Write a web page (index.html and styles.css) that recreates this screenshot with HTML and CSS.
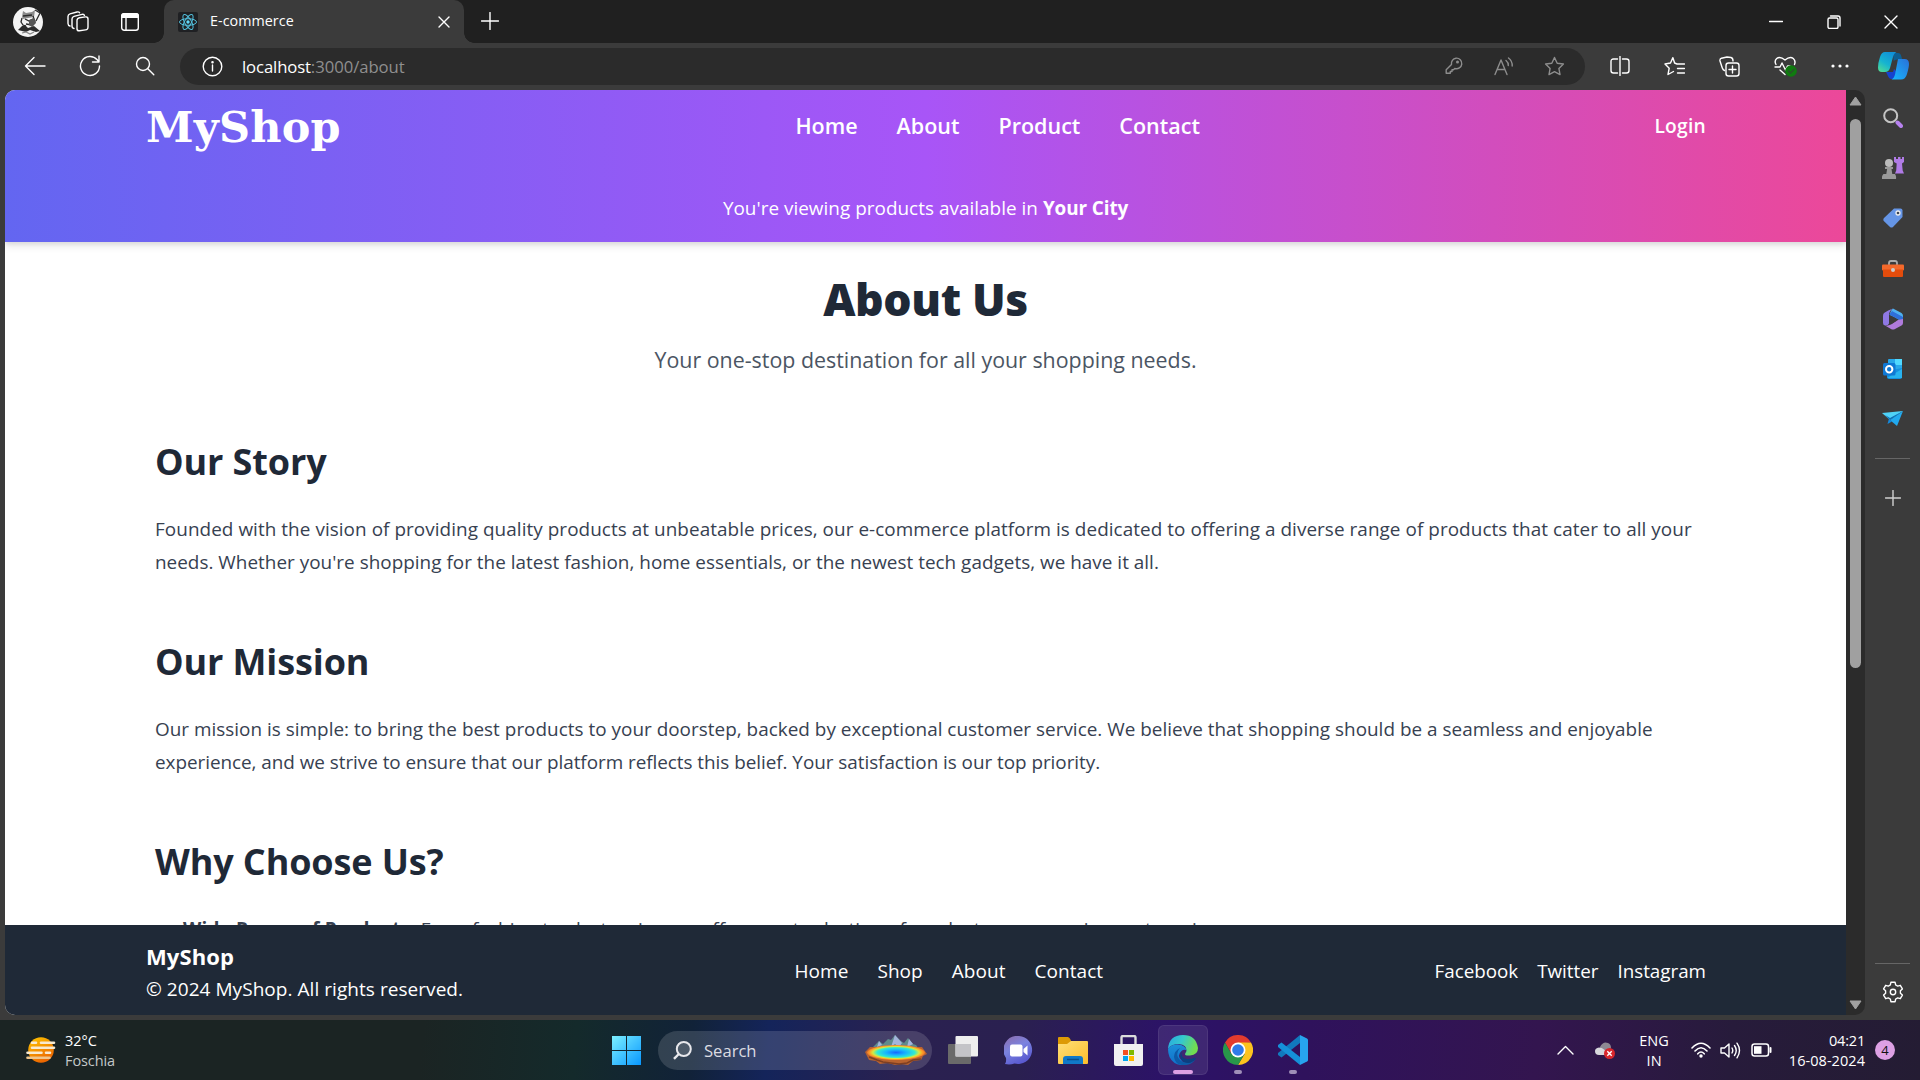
FILE: index.html
```html
<!DOCTYPE html>
<html lang="en">
<head>
<meta charset="utf-8">
<title>E-commerce</title>
<link rel="stylesheet" href="styles.css">
</head>
<body>
<div class="titlebar">
  <div class="slot avatar-slot">
    <svg width="30" height="30" viewBox="0 0 30 30"><circle cx="15" cy="15" r="15" fill="#f4f4f4"/><path d="M9 10l1-6 3 2 6-1 3-2-1 7-6 1-5 1z" fill="#8a8a8a"/><path d="M22 3l5 3-4 8M10 9l9-1M9 11l-1 4 2 3 3 1M12 12l4 2 4-2M13 17l6 1M20 9l2 6-3 4" stroke="#2a2a2a" stroke-width="1.300" fill="none"/><path d="M16 13l5-2 2 5-4 4-3-2z" fill="#555"/><path d="M5 23l4-4 3-1 3 3 6-2 6 5-4 1-6-2-4 2-4-1z" fill="#2c2c2c"/><path d="M9 26l4-1 4 2 4-2" stroke="#888" stroke-width="1.200" fill="none"/></svg>
  </div>
  <div class="slot space-slot">
    <svg class="line" width="22" height="22" viewBox="0 0 22 22"><rect x="10" y="6.500" width="11" height="13" rx="2.500" transform="skewY(-8) translate(0 2)"/><path d="M7 17.500q-2-.3-2-2.500V8q0-2 2-2.600l8-2q2-.4 2.500 1"/><path d="M3 15q-2-.6-2-2.500V5.500q0-2 2-2.600l7-1.900q2-.4 2.600.8"/></svg>
  </div>
  <div class="slot space-slot">
    <svg class="line" width="20" height="20" viewBox="0 0 20 20"><rect x="1.700" y="1.700" width="16.600" height="16.600" rx="2.500"/><path d="M1 6V4q0-3 3-3h12q3 0 3 3v2z" fill="#fff" stroke="none"/><path d="M6 6v12"/></svg>
  </div>
  <div class="tab">
    <svg class="favicon" width="20" height="20" viewBox="0 0 20 20"><rect width="20" height="20" rx="2" fill="#1f2023"/><g fill="none" stroke="#53c1de" stroke-width="1"><ellipse cx="10" cy="10" rx="8.500" ry="3.300"/><ellipse cx="10" cy="10" rx="8.500" ry="3.300" transform="rotate(60 10 10)"/><ellipse cx="10" cy="10" rx="8.500" ry="3.300" transform="rotate(120 10 10)"/></g><circle cx="10" cy="10" r="1.700" fill="#61dafb"/></svg>
    <span class="tab-title">E-commerce</span>
    <svg class="line tab-close" width="12" height="12" viewBox="0 0 12 12"><path d="M1 1l10 10M11 1L1 11"/></svg>
  </div>
  <svg class="line new-tab" width="18" height="18" viewBox="0 0 18 18"><path d="M9 .500v17M.500 9h17"/></svg>
  <div class="window-controls">
    <div class="control"><svg class="line" width="14" height="14" viewBox="0 0 14 14"><path d="M.500 6.500h13"/></svg></div>
    <div class="control"><svg class="line" width="14" height="14" viewBox="0 0 14 14"><rect x="1" y="3" width="10" height="10.500" rx="1.500"/><path d="M3.500 1H11q2 0 2 2v8"/></svg></div>
    <div class="control"><svg class="line" width="14" height="14" viewBox="0 0 14 14"><path d="M1 1l12 12M13 1L1 13"/></svg></div>
  </div>
</div>

<div class="toolbar">
  <div class="tool nav-tool"><svg class="line" width="22" height="20" viewBox="0 0 22 20"><path d="M21 10H1.500M10 1.500L1.500 10l8.500 8.500"/></svg></div>
  <div class="tool nav-tool"><svg class="line" width="22" height="22" viewBox="0 0 22 22"><path d="M20.500 11a9.500 9.500 0 1 1-2.300-6.200L20 7M20 1v6h-6.500"/></svg></div>
  <div class="tool nav-tool"><svg class="line" width="20" height="20" viewBox="0 0 20 20"><circle cx="8" cy="8" r="6.500"/><path d="M12.800 12.800l6 6"/></svg></div>
  <div class="address">
    <svg class="line" width="21" height="21" viewBox="0 0 21 21"><circle cx="10.500" cy="10.500" r="9.300"/><path d="M10.500 9v6"/><circle cx="10.500" cy="6.300" r=".600" fill="#fff"/></svg>
    <div class="url"><span class="host">localhost</span><span class="path">:3000/about</span></div>
    <div class="address-tools">
      <div class="address-tool"><svg class="line dim" width="18" height="18" viewBox="0 0 18 18"><path d="M11 1.200a5.300 5.300 0 1 1-1.200 10.300L8.500 12.800H7v1.700H5.300v1.700H1.200v-3.400l5.300-5.300A5.300 5.300 0 0 1 11 1.200z" /><circle cx="12.500" cy="5" r=".8"/></svg></div>
      <div class="address-tool"><svg class="line dim" width="20" height="19" viewBox="0 0 20 19"><path d="M1 17.500L7 3l6 14.500M3 12.500h8M12 3.500q2.500 2 2.300 5M14.500 1q4 3.200 3.700 8"/></svg></div>
      <div class="address-tool"><svg class="line dim" width="21" height="21" viewBox="0 0 21 21"><path d="M10.500 1.500l2.700 5.700 6.200.8-4.500 4.400 1.100 6.200-5.500-3-5.500 3 1.100-6.200L1.600 8l6.200-.8z"/></svg></div>
    </div>
  </div>
  <div class="browser-tools">
    <div class="browser-tool"><svg class="line" width="20" height="20" viewBox="0 0 20 20"><path d="M7.500 3H3.500Q1 3 1 5.500v9Q1 17 3.500 17h4M12.500 3h4Q19 3 19 5.500v9q0 2.500-2.500 2.500h-4M10 .500v19"/></svg></div>
    <div class="browser-tool"><svg class="line" width="21" height="21" viewBox="0 0 21 21"><path d="M13 8h7.500M13.500 12.500h7M13.500 17h7M13 8L10.600 7 8.900 1.600 6.500 7 1 8l4.200 4.200L4 18.500l5.500-3"/></svg></div>
    <div class="browser-tool"><svg class="line" width="21" height="21" viewBox="0 0 21 21"><rect x="7" y="7" width="13" height="13" rx="2.500"/><path d="M13.500 10v7M10 13.500h7M5.500 14.500Q4 14 3.300 12L1 5q-.4-2 1.500-2.800L8 1l4 .500Q14 2 14 5"/></svg></div>
    <div class="browser-tool"><svg class="line" width="23" height="21" viewBox="0 0 23 21"><path d="M2 8.500Q0 5 2.700 2.500 6-.200 11 4q5-4.200 8.300-1.500Q22 5 20.500 8.500M1 11h5l2-4 3.500 7 2-4H16M6 14l5 4.500"/><circle cx="17" cy="15" r="5.800" fill="#0f7b0f" stroke="none"/><path d="M14.500 15l2 2 3.500-3.500" stroke="#2d4d2d"/></svg></div>
    <div class="browser-tool"><svg width="18" height="4" viewBox="0 0 18 4" fill="#fff"><circle cx="2" cy="2" r="1.600"/><circle cx="9" cy="2" r="1.600"/><circle cx="16" cy="2" r="1.600"/></svg></div>
  </div>
  <div class="copilot"><svg width="31" height="28" viewBox="0 0 31 28"><defs><linearGradient id="cpa" x1="0" y1="1" x2=".6" y2="0"><stop offset="0" stop-color="#57e08e"/><stop offset=".5" stop-color="#16b4d0"/><stop offset="1" stop-color="#1192d8"/></linearGradient><linearGradient id="cpb" x1="0" y1="1" x2="1" y2="0"><stop offset="0" stop-color="#16b8ff"/><stop offset="1" stop-color="#2a70d8"/></linearGradient></defs><path d="M15 1h5q2.500 0 3.200 3l1 3.500h-5q-3 0-3.500 2z" fill="#0d5e92"/><path d="M8 20h7l1-3 3 3-2.500 7h-3Q11 27 10 24z" fill="#1543cf"/><path d="M7 0h11.500Q16 1 15 5l-3 11q-1.200 4-5 4H4q-4 0-4-4.500Q0 11 2 5 3.500 0 7 0z" fill="url(#cpa)"/><path d="M20 7h6.500Q31 7 31 12q0 3-2 10-1.500 5.500-6 5.500h-9.500q2.500-1 3.500-5z" fill="url(#cpb)"/></svg></div>
</div>

<div class="workspace">
  <div class="viewport">
    <header class="site-header">
      <div class="header-row">
        <div class="logo">MyShop</div>
        <nav class="site-nav"><a>Home</a><a>About</a><a>Product</a><a>Contact</a></nav>
        <a class="login">Login</a>
      </div>
      <p class="location">You're viewing products available in <b>Your City</b></p>
    </header>
    <main class="about">
      <div class="hero">
        <h1>About Us</h1>
        <p>Your one-stop destination for all your shopping needs.</p>
      </div>
      <section>
        <h2>Our Story</h2>
        <p>Founded with the vision of providing quality products at unbeatable prices, our e-commerce platform is dedicated to offering a diverse range of products that cater to all your<br><span class="snug">needs. Whether you're shopping for the latest fashion, home essentials, or the newest tech gadgets, we have it all.</span></p>
      </section>
      <section>
        <h2>Our Mission</h2>
        <p><span class="snug">Our mission is simple: to bring the best products to your doorstep, backed by exceptional customer service. We believe that shopping should be a seamless and enjoyable</span><br><span class="tight">experience, and we strive to ensure that our platform reflects this belief. Your satisfaction is our top priority.</span></p>
      </section>
      <section>
        <h2>Why Choose Us?</h2>
        <ul><li><b>Wide Range of Products:</b> <span class="snug">From fashion to electronics, we offer a vast selection of products across various categories.</span></li></ul>
      </section>
    </main>
    <footer class="site-footer">
      <div class="brand"><strong>MyShop</strong><span>© 2024 MyShop. All rights reserved.</span></div>
      <nav class="footer-nav"><a>Home</a><a>Shop</a><a>About</a><a>Contact</a></nav>
      <nav class="social"><a>Facebook</a><a>Twitter</a><a>Instagram</a></nav>
    </footer>
  </div>
  <div class="scrollbar">
    <svg width="13" height="10" viewBox="0 0 13 10"><path d="M6.500 1L12 9H1z" fill="#a0a0a0" stroke="#a0a0a0" stroke-linejoin="round"/></svg>
    <div class="thumb"></div>
    <svg class="arrow-down" width="13" height="10" viewBox="0 0 13 10"><path d="M6.500 9L1 1h11z" fill="#a0a0a0" stroke="#a0a0a0" stroke-linejoin="round"/></svg>
  </div>
  <aside class="sidebar">
    <div class="side-item"><svg width="20" height="20" viewBox="0 0 20 20"><circle cx="7.700" cy="7.700" r="6.500" fill="none" stroke="#c4c4c4" stroke-width="2"/><path d="M14.500 14.500l3.500 3.500" stroke="#b782ef" stroke-width="4" stroke-linecap="round"/></svg></div>
    <div class="side-item"><svg width="22" height="22" viewBox="0 0 22 22"><path d="M12 0h2v2h2V0h2.500v2h1.500V0h2v5l-2 1.500.7 7 1.300 3h-9l1.200-3 .5-7L12 5z" fill="#b07be6"/><circle cx="7" cy="6" r="4" fill="#bbb"/><path d="M3 10h8v2H9.500l.8 5H13q1.500 2 1 5H0q-.500-3 1.500-5h2.800l.8-5H3z" fill="#999"/></svg></div>
    <div class="side-item"><svg width="20" height="20" viewBox="0 0 20 20"><path d="M11 .500h6.500q2 0 2 2V9L10 19q-1.500 1-3 0L.8 13Q-.200 11.500 1 10z" fill="#6595e6"/><circle cx="15" cy="5" r="2" fill="#3b4454" stroke="#eee" stroke-width="1.300"/></svg></div>
    <div class="side-item"><svg width="22" height="18" viewBox="0 0 22 18"><path d="M7 5V3q0-2 2-2h4q2 0 2 2v2" stroke="#aaa" stroke-width="1.800" fill="none"/><rect y="4.500" width="22" height="6" rx="1" fill="#f4692b"/><path d="M1 9.500h20V16q0 1-1 1H2q-1 0-1-1z" fill="#e34c0c"/><circle cx="11" cy="10" r="2" fill="#ccc"/></svg></div>
    <div class="side-item"><svg width="20" height="22" viewBox="0 0 20 22"><path d="M10 .500Q5 2 1 5 0 6 0 8v7q0 2 2 2.500 3 .500 4-2V7q0-4 4-6.500z" fill="#8f78e4"/><path d="M10 .500l8.500 4.500Q20 6 20 8v6l-7-4-6-3q0-4 3-6.500z" fill="#4eb0f0"/><path d="M6 11V6.500L13 10l7 4V9L9 3 6 7z" fill="#2f6fd8"/><path d="M20 12v3q0 1.500-1.500 2.500L12 21q-2 1-4 0l-6-3.500q3 .5 6-1l7-4.500 5-1z" fill="#b07bdc"/><path d="M8 8l5 2.500v2.500L8.500 16 6.500 15V8z" fill="#3b3b3b"/></svg></div>
    <div class="side-item"><svg width="20" height="20" viewBox="0 0 20 20"><rect x="5" width="14" height="15" rx="1" fill="#28a8ea"/><rect x="12" width="7" height="6" fill="#50d9ff"/><path d="M4 12l15-3v9q0 2-2 2H6q-2 0-2-2z" fill="#1490df"/><path d="M4 19l15-9v9z" fill="#28b3f0"/><rect y="4" width="12.500" height="12.500" rx="1.500" fill="#0f78d4"/><circle cx="6.200" cy="10.200" r="3.200" fill="none" stroke="#fff" stroke-width="2"/></svg></div>
    <div class="side-item"><svg width="22" height="16" viewBox="0 0 22 16"><path d="M0 2l21-2-13 9z" fill="#4fd2f7"/><path d="M21 0l-6 15-7-6z" fill="#22a9ee"/><path d="M3 4l5 5 13-9L8 7z" fill="#0c6db5"/><path d="M7 7.500L5.500 13 10 10.500z" fill="#1589dc"/></svg></div>
    <div class="divider"></div>
    <svg class="line side-add" width="16" height="16" viewBox="0 0 16 16"><path d="M8 .500v15M.500 8h15"/></svg>
    <div class="divider bottom"></div>
    <svg class="line gear" width="22" height="22" viewBox="0 0 22 22"><path d="M8.900 1.300h4.200l.6 2.700 2 1.100 2.600-.8 2.100 3.600-2 1.900v2.400l2 1.900-2.100 3.600-2.600-.8-2 1.100-.6 2.700H8.900L8.300 18l-2-1.100-2.600.8-2.100-3.600 2-1.900V9.800l-2-1.900 2.100-3.600 2.600.8 2-1.100z"/><circle cx="11" cy="11" r="2.700"/></svg>
  </aside>
</div>

<div class="taskbar">
  <div class="weather">
    <svg width="30" height="26" viewBox="0 0 30 26"><defs><linearGradient id="sun" x1="0" y1="0" x2=".5" y2="1"><stop offset="0" stop-color="#ffc800"/><stop offset="1" stop-color="#ec6600"/></linearGradient></defs><circle cx="15" cy="13" r="12.800" fill="url(#sun)"/><g stroke="#f8ead0" stroke-width="2.600" stroke-linecap="round"><path d="M6 5.800h4M15 5.800h13M6 10.800h22M1.500 15.800h14M20 15.800h4"/><path d="M1.500 20.800h22" stroke="#f0c58b"/></g></svg>
    <div class="weather-text"><span>32°C</span><span class="condition">Foschia</span></div>
  </div>
  <div class="start"><svg width="29" height="29" viewBox="0 0 29 29"><defs><linearGradient id="win" x1="0" y1="0" x2="1" y2="1"><stop offset="0" stop-color="#7cf0ff"/><stop offset="1" stop-color="#0897ff"/></linearGradient></defs><path d="M0 0h14v14H0zM15 0h14v14H15zM0 15h14v14H0zM15 15h14v14H15z" fill="url(#win)"/></svg></div>
  <div class="search">
    <svg width="19" height="19" viewBox="0 0 19 19" fill="none" stroke="#e8e8ec" stroke-width="2"><circle cx="10.800" cy="8" r="7" fill="#ffffff22"/><path d="M5.800 13L1 17.800" stroke-width="2.400"/></svg>
    <span>Search</span>
    <svg class="spring" width="62" height="31" viewBox="0 0 62 31"><defs><radialGradient id="pool"><stop offset="0" stop-color="#1668ff"/><stop offset=".35" stop-color="#18b6ff"/><stop offset=".65" stop-color="#31ead0"/><stop offset=".8" stop-color="#d8e83e"/><stop offset=".92" stop-color="#ff9a24"/><stop offset="1" stop-color="#e87830"/></radialGradient></defs><path d="M8 12l6-6 4 3 5-5 3 1 4-5 6 6 3 2 4-5 5 6 3 1 3 4z" fill="#5f8a8c"/><path d="M30 0l-4 12 4-3 4 3 3-4zM44 4l-2 8 6-3zM14 6l-2 6 5-2z" fill="#a3b5dc"/><path d="M0 17l5-5h52l5 7-4 2-2 4-8 1-5 4-7-1-6 1-7-2-8 1-4-3-7-1z" fill="#b8622f"/><path d="M4 22l8 3 6 2 8 1 8 1 8-1 6-3 8-1" stroke="#7d3f22" stroke-width="1.500" fill="none"/><ellipse cx="31" cy="17.500" rx="29" ry="7.500" fill="url(#pool)"/></svg>
  </div>
  <div class="apps">
    <div class="app"><svg width="30" height="28" viewBox="0 0 30 28"><rect y="8" width="23" height="20" rx="1" fill="#6a6a6a"/><rect x="7.500" width="22.500" height="20.500" rx="1" fill="#eee"/><rect x="7.500" y="8" width="15.500" height="12.500" fill="#c4c4c8"/></svg></div>
    <div class="app"><svg width="29" height="29" viewBox="0 0 29 29"><defs><linearGradient id="chat" x1="0" y1="0" x2=".5" y2="1"><stop offset="0" stop-color="#8d6ba8"/><stop offset=".5" stop-color="#7b83e0"/><stop offset="1" stop-color="#5a5ad0"/></linearGradient></defs><path d="M15 0a14 14 0 1 1-4.500 27.500Q6 29 1 28q1.500-2 1-6A14 14 0 0 1 15 0z" fill="url(#chat)"/><rect x="6" y="8.500" width="12.500" height="12" rx="2" fill="#fff"/><path d="M19.500 13l4-3.500v10l-4-3.500z" fill="#fff"/></svg></div>
    <div class="app"><svg width="30" height="27" viewBox="0 0 30 27"><defs><linearGradient id="fold" x1="0" y1="0" x2="1" y2="1"><stop offset="0" stop-color="#ffdf78"/><stop offset="1" stop-color="#fdbe2b"/></linearGradient></defs><path d="M0 1q0-1 1-1h9q1.500 0 3 3.500V8H0z" fill="#dd9a05"/><path d="M0 7h9l4-3h16q1 0 1 1v21q0 1-1 1H1q-1 0-1-1z" fill="url(#fold)"/><path d="M5 27v-5q0-3 3-3h14q3 0 3 3v5z" fill="#1179c8"/><path d="M9 22.500h12" stroke="#0a4f8d" stroke-width="1.500"/></svg></div>
    <div class="app"><svg width="29" height="31" viewBox="0 0 29 31"><path d="M7.500 10V2.500Q7.500 1 9 1h11q1.500 0 1.500 1.500V10" fill="none" stroke="#dcdcdc" stroke-width="2.400"/><path d="M0 9h29v20q0 2-2 2H2q-2 0-2-2z" fill="#f1f1f1"/><path d="M9 15h5v5H9z" fill="#f25022"/><path d="M15 15h5v5h-5z" fill="#7fba00"/><path d="M9 21h5v5H9z" fill="#00a4ef"/><path d="M15 21h5v5h-5z" fill="#ffb900"/></svg></div>
    <div class="app active"><svg width="30" height="30" viewBox="0 0 30 30"><defs><linearGradient id="edgea" x1="0" y1="0" x2="1" y2=".3"><stop offset="0" stop-color="#28a8e0"/><stop offset=".5" stop-color="#35c8cd"/><stop offset="1" stop-color="#72dc50"/></linearGradient><linearGradient id="edgeb" x1="0" y1="0" x2="0" y2="1"><stop offset="0" stop-color="#1b8fd8"/><stop offset="1" stop-color="#1170c9"/></linearGradient></defs><path d="M0 14Q1 0 15 0q13 0 15 13 0 7-8 7.500-5 .500-5-1.500l1.500-3Q19 10 11 9 3 9 0 14z" fill="url(#edgea)"/><path d="M0 14q3-5 10-4.500 7 .5 8.500 5.500-3-1-5 1Q8 21 14 26l3 4Q6 31 1.500 22 0 18 0 14z" fill="url(#edgeb)"/><path d="M12 13q-6 7 1 13 6 3 14-1-5 6-13 5-7-1-8-8 0-6 6-9z" fill="#0d5ba8"/><path d="M13.500 16q-1 7 5 8 5 .5 8.500-1.500l1 1Q23 30 16 27q-6-4-2.500-11z" fill="#0c3f80"/></svg><i class="indicator wide"></i></div>
    <div class="app"><svg width="30" height="30" viewBox="0 0 30 30"><path d="M2 7.500a15 15 0 0 1 26 0L15 8.500 8.500 19z" fill="#e33b2e"/><path d="M28 7.500A15 15 0 0 1 15 30l6.500-11L15 7.500z" fill="#fcc31e"/><path d="M2 7.500A15 15 0 0 0 15 30l6.500-11h-13z" fill="#28964a"/><circle cx="15" cy="15" r="7.500" fill="#fff"/><circle cx="15" cy="15" r="5.800" fill="#2f7be9"/></svg><i class="indicator"></i></div>
    <div class="app"><svg width="30" height="30" viewBox="0 0 30 30"><path d="M22 0v8L3.500 22.500 0 20v-2z" fill="#1179bd"/><path d="M22 30v-8L3.500 7.500 0 10v2z" fill="#1590d8"/><path d="M22 0l7 3.500q1 .5 1 1.500v20q0 1-1 1.500L22 30z" fill="#27a4ee"/></svg><i class="indicator"></i></div>
  </div>
  <div class="tray">
    <svg class="line chevron" width="17" height="10" viewBox="0 0 17 10"><path d="M1 9l7.500-7.500L16 9"/></svg>
    <svg class="cloud" width="21" height="17" viewBox="0 0 21 17"><path d="M5 5q3-6 8-4 3 1 3 5l-5 6H6z" fill="#8e8a93"/><path d="M4 13Q0 13 0 9q0-3 4-3.500 3 0 5 2l5 5.500z" fill="#d8d8dc"/><circle cx="14.500" cy="11.500" r="5.500" fill="#d8262c"/><path d="M12.300 9.300l4.400 4.400M16.700 9.300l-4.400 4.400" stroke="#fff" stroke-width="1.400"/></svg>
    <div class="language"><span>ENG</span><span>IN</span></div>
    <svg class="line" width="20" height="16" viewBox="0 0 20 16"><path d="M1 6q9-9.500 18 0M4 9q6-6.500 12 0M6.800 11.800q3.200-3.500 6.400 0" stroke-width="1.600"/><circle cx="10" cy="14" r="1.700" fill="#fff" stroke="none"/></svg>
    <svg class="line volume" width="21" height="17" viewBox="0 0 21 17"><path d="M1 6h3.500L9 2v13l-4.500-4H1zM12 6q1.500 2.500 0 5M14.500 3.500q3.500 5 0 10M17 1.200q5 7.300 0 14.600"/></svg>
    <svg class="line battery" width="21" height="14" viewBox="0 0 21 14"><rect x="1" y="1" width="16.500" height="12" rx="2.500" stroke-width="1.500"/><rect x="3" y="3.200" width="7.500" height="7.600" fill="#fff" stroke="none"/><path d="M19.500 5v4" stroke-width="2"/></svg>
    <div class="clock"><span class="time">04:21</span><span>16-08-2024</span></div>
    <div class="count">4</div>
  </div>
</div>
</body>
</html>
```
FILE: styles.css
```css
* { box-sizing: border-box; margin: 0; padding: 0; }
body {
  width: 1920px; height: 1080px; overflow: hidden;
  display: flex; flex-direction: column;
  background: #3b3b3b; color: #fff;
  font-family: "Open Sans", "Noto Sans", sans-serif;
}
svg { flex: none; display: block; }
.line { fill: none; stroke: #fff; stroke-width: 1.4; stroke-linejoin: round; stroke-linecap: round; }
.line.dim { stroke: #8d8d8d; }

/* Title bar */
.titlebar { height: 43px; flex: none; display: flex; align-items: center; background: #202020; }
.slot { display: flex; align-items: center; justify-content: center; }
.avatar-slot { width: 56px; }
.space-slot { width: 44px; margin-right: 8px; }
.titlebar .slot:nth-child(3) { margin-right: 12px; }
.tab { width: 300px; height: 43px; display: flex; align-items: center; padding: 0 14px; background: #3b3b3b; border-radius: 10px 10px 0 0; position: relative; }
.tab::before, .tab::after { content: ""; position: absolute; bottom: 0; width: 10px; height: 10px; }
.tab::before { left: -10px; background: radial-gradient(circle at 0 0, #202020 9.5px, #3b3b3b 10px); }
.tab::after { right: -10px; background: radial-gradient(circle at 100% 0, #202020 9.5px, #3b3b3b 10px); }
.tab-title { font-size: 14.3px; letter-spacing: .05px; margin-left: 12px; line-height: 20px; margin-top: -2px; }
.tab-close { margin-left: auto; }
.new-tab { margin-left: 17px; margin-bottom: 2px; }
.window-controls { margin-left: auto; display: flex; }
.control { width: 57.500px; height: 43px; display: flex; align-items: center; justify-content: center; }

/* Toolbar */
.toolbar { height: 47px; flex: none; display: flex; align-items: center; padding: 0 0 1px 7px; }
.tool { width: 55px; display: flex; align-items: center; justify-content: center; }
.address { width: 1405px; height: 37px; margin-left: 8px; padding-left: 22px; display: flex; align-items: center; background: #2b2b2b; border-radius: 19px; }
.url { margin-left: 19px; font-size: 16.7px; line-height: 24px; padding-top: 1px; }
.host { letter-spacing: -.12px; }
.path { color: #8f8f8f; letter-spacing: -.05px; }
.address-tools { margin-left: auto; margin-right: 6px; display: flex; }
.address-tool { width: 50px; display: flex; justify-content: center; align-items: center; }
.browser-tools { display: flex; margin-left: 7px; }
.browser-tool { width: 55.200px; display: flex; justify-content: center; align-items: center; }
.copilot { margin-left: 10px; width: 31px; }

/* Browser content */
.workspace { height: 925px; flex: none; display: flex; padding-left: 5px; }
.viewport { width: 1841px; height: 925px; display: flex; flex-direction: column; background: #fff; border-radius: 10px 0 0 10px; overflow: hidden; }
.site-header { height: 152px; flex: none; background: linear-gradient(90deg, #6366f1, #a855f7, #ec4899); box-shadow: 0 4px 8px rgba(0,0,0,.1), 0 2px 4px rgba(0,0,0,.07); position: relative; }
.header-row { height: 72px; padding: 0 140px 0 141px; display: flex; justify-content: space-between; align-items: center; }
.logo { font: 700 43px/56px "DejaVu Serif", serif; letter-spacing: .2px; padding-top: 2px; }
.site-nav { display: flex; gap: 39px; font-size: 21.5px; font-weight: 600; line-height: 30px; }
.login { font-size: 19.2px; font-weight: 600; letter-spacing: .25px; line-height: 30px; }
.location { text-align: center; font-size: 18.9px; letter-spacing: .03px; line-height: 30px; margin-top: 31px; }
.location b { letter-spacing: -.1px; }

.about { flex: 1; min-height: 0; overflow: hidden; padding: 0 150px; color: #374151; }
.hero { text-align: center; }
h1 { font-size: 44.500px; font-weight: 800; line-height: 56px; color: #1f2937; margin-top: 29px; letter-spacing: -.4px; }
.hero p { font-size: 21.400px; line-height: 36px; color: #4b5563; margin-top: 15px; }
h2 { font-size: 36px; font-weight: 700; line-height: 45px; color: #1f2937; letter-spacing: -.12px; }
.hero + section { margin-top: 61px; }
section { height: 200px; }
section p, li { font-size: 18.900px; letter-spacing: .06px; line-height: 33px; white-space: nowrap; }
.snug { letter-spacing: .02px; }
.tight { letter-spacing: -.04px; }
section h2 + * { margin-top: 29px; }
ul { padding-left: 28px; }
li b { letter-spacing: .2px; }

.site-footer { height: 90px; flex: none; padding: 3px 140px 0 141px; display: flex; justify-content: space-between; align-items: center; background: #1f2937; font-size: 19px; letter-spacing: .05px; line-height: 33px; }
.brand { display: flex; flex-direction: column; padding-top: 2px; }
.brand strong { font-size: 22px; letter-spacing: .1px; }
.footer-nav { display: flex; gap: 29px; }
.social { display: flex; gap: 19px; font-size: 18.800px; letter-spacing: 0; }

.scrollbar { width: 19px; display: flex; flex-direction: column; align-items: center; background: #2b2b2b; border-radius: 0 10px 10px 0; padding: 6px 0 5px; }
.thumb { width: 11px; height: 549px; margin-top: 13px; border-radius: 6px; background: #a0a0a0; }
.arrow-down { margin-top: auto; }

.sidebar { flex: 1; display: flex; flex-direction: column; align-items: center; padding: 3px 0 12px; }
.side-item { height: 50.200px; display: flex; align-items: center; justify-content: center; }
.divider { width: 35px; height: 1px; background: #666; margin-top: 14px; }
.side-add { margin-top: 31px; stroke: #d0d0d0; }
.divider.bottom { margin-top: auto; }
.gear { margin-top: 17px; }

/* Taskbar */
.taskbar { height: 60px; margin-top: 5px; flex: none; display: flex; align-items: center; background: linear-gradient(95deg, #1b2423 0, #1b2423 22%, #142a2b 30%, #112238 36%, #14245a 40%, #2a2150 47%, #2a2050 53%, #2c1268 61%, #2f125c 68%, #33154f 80%, #271b3b 90%, #241c33 100%); }
.weather { width: 585px; padding-left: 26px; display: flex; align-items: center; gap: 9px; }
.weather-text, .language, .clock { display: flex; flex-direction: column; font-size: 14.500px; line-height: 20px; padding-top: 2px; }
.condition { color: #c4c8c8; letter-spacing: -.1px; }
.start { width: 73px; padding-left: 27px; }
.search { width: 274px; height: 39px; border-radius: 20px; background: rgba(255,255,255,.14); display: flex; align-items: center; padding: 0 5px 0 15px; }
.search span { font-size: 16.600px; color: #dcdce2; margin-left: 12px; }
.spring { margin-left: auto; }
.apps { display: flex; gap: 5px; margin-left: 6px; }
.app { width: 50px; height: 50px; border-radius: 6px; display: flex; align-items: center; justify-content: center; position: relative; }
.active { background: rgba(255,255,255,.09); border: 1px solid rgba(255,255,255,.07); }
.indicator { position: absolute; left: 50%; bottom: 1px; width: 8px; height: 4px; margin-left: -4px; border-radius: 2px; background: #9f8fb8; }
.indicator.wide { bottom: 0; width: 20px; margin-left: -10px; background: #dda0e4; }
.tray { margin-left: auto; display: flex; align-items: center; padding-right: 25px; }
.cloud { margin-left: 21px; margin-right: 23px; }
.language { align-items: center; margin-right: 22px; }
.volume { margin-left: 9px; }
.battery { margin-left: 10px; }
.clock { align-items: flex-end; margin-left: 17px; letter-spacing: .05px; }
.time { letter-spacing: -.2px; }
.count { width: 20px; height: 20px; margin-left: 10px; border-radius: 50%; background: #dda0e4; color: #111; font-size: 13px; line-height: 20px; text-align: center; }
```
